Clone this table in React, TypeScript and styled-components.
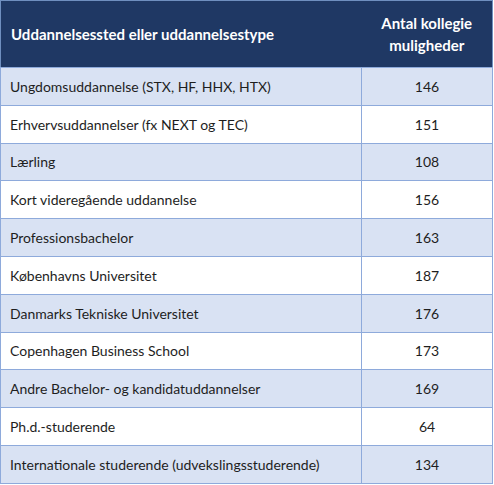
import styled, { createGlobalStyle } from "styled-components";

const GlobalStyle = createGlobalStyle`
  body {
    margin: 0;
    background: #ffffff;
    font-family: Lato, "Open Sans", sans-serif;
  }
`;

interface IRow {
    name: string;
    count: number;
}

const rows: IRow[] = [
    { name: "Ungdomsuddannelse (STX, HF, HHX, HTX)", count: 146 },
    { name: "Erhvervsuddannelser (fx NEXT og TEC)", count: 151 },
    { name: "Lærling", count: 108 },
    { name: "Kort videregående uddannelse", count: 156 },
    { name: "Professionsbachelor", count: 163 },
    { name: "Københavns Universitet", count: 187 },
    { name: "Danmarks Tekniske Universitet", count: 176 },
    { name: "Copenhagen Business School", count: 173 },
    { name: "Andre Bachelor- og kandidatuddannelser", count: 169 },
    { name: "Ph.d.-studerende", count: 64 },
    { name: "Internationale studerende (udvekslingsstuderende)", count: 134 },
];

const Table = styled.table`
  width: 493px;
  border-collapse: collapse;
  table-layout: fixed;
  border: 1px solid #6f8fbf;
  font-size: 14px;
  color: #1e1e1e;
`;

const HeadCell = styled.th<{ $center?: boolean }>`
  background-color: #1f3864;
  color: #ffffff;
  font-weight: bold;
  font-size: 15px;
  height: 67px;
  padding: 0 10px;
  text-align: ${(props) => (props.$center ? "center" : "left")};
  line-height: 22px;
  box-sizing: border-box;
`;

const Row = styled.tr<{ $shaded: boolean }>`
  background-color: ${(props) => (props.$shaded ? "#d9e2f3" : "#ffffff")};
`;

const Cell = styled.td<{ $center?: boolean }>`
  height: 37.8px;
  padding: 0 9px;
  border: 1px solid #8eaadb;
  text-align: ${(props) => (props.$center ? "center" : "left")};
  box-sizing: border-box;
  white-space: nowrap;
`;

function App() {
    return (
        <>
            <GlobalStyle />
            <Table>
                <colgroup>
                    <col style={{ width: 361 }} />
                    <col />
                </colgroup>
                <thead>
                    <tr>
                        <HeadCell>Uddannelsessted eller uddannelsestype</HeadCell>
                        <HeadCell $center>Antal kollegie<br />muligheder</HeadCell>
                    </tr>
                </thead>
                <tbody>
                    {rows.map((row, index) => (
                        <Row key={row.name} $shaded={index % 2 === 0}>
                            <Cell>{row.name}</Cell>
                            <Cell $center>{row.count}</Cell>
                        </Row>
                    ))}
                </tbody>
            </Table>
        </>
    );
};

export default App;
